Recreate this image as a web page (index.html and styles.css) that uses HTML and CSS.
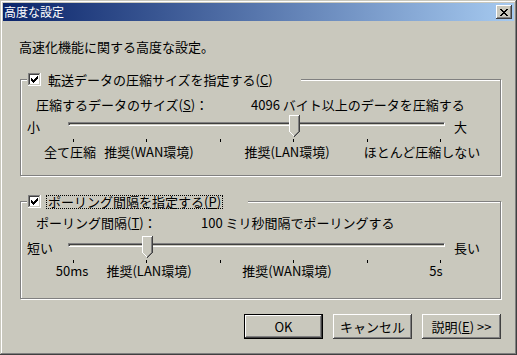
FILE: index.html
```html
<!DOCTYPE html>
<html lang="ja">
<head>
<meta charset="utf-8">
<title>高度な設定</title>
<link rel="stylesheet" href="styles.css">
</head>
<body>
<div class="window">
  <div class="titlebar">
    <span class="title">高度な設定</span>
    <span class="close">
      <svg width="8" height="7" viewBox="0 0 8 7" shape-rendering="crispEdges"><path d="M0 0h2v1H0zM6 0h2v1H6zM1 1h2v1H1zM5 1h2v1H5zM2 2h4v1H2zM3 3h2v1H3zM2 4h4v1H2zM1 5h2v1H1zM5 5h2v1H5zM0 6h2v1H0zM6 6h2v1H6z" fill="#000"/></svg>
    </span>
  </div>
  <div class="client">
    <p class="intro">高速化機能に関する高度な設定。</p>

    <section class="group g1">
      <div class="legend legend1">
        <svg class="cb" width="13" height="13" viewBox="0 0 13 13" shape-rendering="crispEdges"><rect width="13" height="13" fill="#fff"/><path d="M0 0h12v1H1v11H0z" fill="#808080"/><path d="M1 1h10v1H2v9H1z" fill="#404040"/><path d="M12 0h1v13H0v-1h12z" fill="#fff"/><path d="M11 1h1v11H1v-1h10z" fill="#c9c8bd"/><path d="M3 5h1v3H3zM4 6h1v3H4zM5 7h1v3H5zM6 6h1v3H6zM7 5h1v3H7zM8 4h1v3H8zM9 3h1v3H9z" fill="#000"/></svg>
        <span class="cb-label">転送データの圧縮サイズを指定する(<u>C</u>)</span>
      </div>
      <div class="row">
        <span class="row-label rl1">圧縮するデータのサイズ(<u>S</u>)：</span>
        <span class="row-value">4096 バイト以上のデータを圧縮する</span>
      </div>
      <div class="slider">
        <span class="end-l">小</span>
        <div class="track-area">
          <div class="track"></div>
          <svg class="thumb thumb1" width="11" height="22" viewBox="0 0 11 22" shape-rendering="crispEdges"><path d="M0 0h11v16h-1v1h-1v1h-1v1h-1v1h-1v1h-1v-1h-1v-1h-1v-1h-1v-1h-1v-1H0z" fill="#c9c8bd"/><path d="M0 0h10v1H1v15H0zM0 16h1v1H0zM1 17h1v1H1zM2 18h1v1H2zM3 19h1v1H3zM4 20h1v1H4z" fill="#fff"/><path d="M9 1h1v15H9zM8 17h1v1H8zM7 18h1v1H7zM6 19h1v1H6zM5 20h1v1H5zM9 16h1v1H9z" fill="#808080"/><path d="M10 0h1v17h-1zM9 17h1v1H9zM8 18h1v1H8zM7 19h1v1H7zM6 20h1v1H6zM5 21h1v1H5z" fill="#404040"/></svg>
        </div>
        <span class="end-r">大</span>
      </div>
      <div class="ticks"><i></i><i></i><i></i><i></i><i></i><i></i></div>
      <div class="scale scale1">
        <span class="sc-all">全て圧縮</span>
        <span class="sc-wan1">推奨(WAN環境)</span>
        <span class="sc-lan1">推奨(LAN環境)</span>
        <span class="sc-none">ほとんど圧縮しない</span>
      </div>
    </section>

    <section class="group g2">
      <div class="legend legend2">
        <svg class="cb" width="13" height="13" viewBox="0 0 13 13" shape-rendering="crispEdges"><rect width="13" height="13" fill="#fff"/><path d="M0 0h12v1H1v11H0z" fill="#808080"/><path d="M1 1h10v1H2v9H1z" fill="#404040"/><path d="M12 0h1v13H0v-1h12z" fill="#fff"/><path d="M11 1h1v11H1v-1h10z" fill="#c9c8bd"/><path d="M3 5h1v3H3zM4 6h1v3H4zM5 7h1v3H5zM6 6h1v3H6zM7 5h1v3H7zM8 4h1v3H8zM9 3h1v3H9z" fill="#000"/></svg>
        <span class="cb-label focused">ポーリング間隔を指定する(<u>P</u>)</span>
      </div>
      <div class="row">
        <span class="row-label rl2">ポーリング間隔(<u>T</u>)：</span>
        <span class="row-value">100 ミリ秒間隔でポーリングする</span>
      </div>
      <div class="slider">
        <span class="end-l">短い</span>
        <div class="track-area">
          <div class="track"></div>
          <svg class="thumb thumb2" width="11" height="22" viewBox="0 0 11 22" shape-rendering="crispEdges"><path d="M0 0h11v16h-1v1h-1v1h-1v1h-1v1h-1v1h-1v-1h-1v-1h-1v-1h-1v-1h-1v-1H0z" fill="#c9c8bd"/><path d="M0 0h10v1H1v15H0zM0 16h1v1H0zM1 17h1v1H1zM2 18h1v1H2zM3 19h1v1H3zM4 20h1v1H4z" fill="#fff"/><path d="M9 1h1v15H9zM8 17h1v1H8zM7 18h1v1H7zM6 19h1v1H6zM5 20h1v1H5zM9 16h1v1H9z" fill="#808080"/><path d="M10 0h1v17h-1zM9 17h1v1H9zM8 18h1v1H8zM7 19h1v1H7zM6 20h1v1H6zM5 21h1v1H5z" fill="#404040"/></svg>
        </div>
        <span class="end-r">長い</span>
      </div>
      <div class="ticks"><i></i><i></i><i></i><i></i><i></i><i></i></div>
      <div class="scale scale2">
        <span class="sc-50">50ms</span>
        <span class="sc-lan2">推奨(LAN環境)</span>
        <span class="sc-wan2">推奨(WAN環境)</span>
        <span class="sc-5s">5s</span>
      </div>
    </section>

    <div class="buttons">
      <button class="btn btn-default" type="button">OK</button>
      <button class="btn" type="button">キャンセル</button>
      <button class="btn" type="button">説明(<u>E</u>) &gt;&gt;</button>
    </div>
  </div>
</div>
</body>
</html>
```

FILE: styles.css
```css
html, body {
  margin: 0;
  padding: 0;
  background: #c9c8bd;
}

body {
  font-family: "Noto Sans CJK JP", "Noto Sans", sans-serif;
  font-size: 13px;
  color: #000;
}

.window {
  width: 517px;
  height: 355px;
  box-sizing: border-box;
  padding: 3px;
  background: #c9c8bd;
  box-shadow:
    inset -1px -1px 0 #404040,
    inset 1px 1px 0 #c9c8bd,
    inset -2px -2px 0 #808080,
    inset 2px 2px 0 #fff;
  display: flex;
  flex-direction: column;
}

.titlebar {
  height: 18px;
  display: flex;
  align-items: center;
  justify-content: space-between;
  padding: 0 2px 0 1px;
  background: linear-gradient(to right, #0a246a, #a6caf0);
  color: #fff;
}

.title {
  line-height: 18px;
  font-size: 12px;
}

.close {
  width: 16px;
  height: 14px;
  box-sizing: border-box;
  display: flex;
  align-items: center;
  justify-content: center;
  background: #c9c8bd;
  box-shadow:
    inset -1px -1px 0 #404040,
    inset 1px 1px 0 #fff,
    inset -2px -2px 0 #808080,
    inset 2px 2px 0 #c9c8bd;
}

.client {
  flex: 1;
  padding: 0 13px 0 16px;
}

.intro {
  margin: 18px 0 0;
  line-height: 15px;
}

.group {
  position: relative;
  box-sizing: border-box;
  margin: 25px 0 0 1px;
  border: 1px solid #808080;
  box-shadow: 1px 1px 0 #fff, inset 1px 1px 0 #fff;
}

.g1 { height: 97px; }
.g2 { height: 98px; }

.legend {
  position: absolute;
  top: -7px;
  left: 6px;
  height: 13px;
  padding-left: 1px;
  display: flex;
  align-items: center;
  background: #c9c8bd;
}

.legend1 { width: 273px; }
.legend2 { width: 220px; }

.cb {
  display: block;
  flex: none;
}

.cb-label {
  margin-left: 5px;
  padding: 0 1px;
  line-height: 12px;
  border: 1px dotted transparent;
  white-space: nowrap;
}

.cb-label.focused {
  border-color: #000;
}

.row {
  display: flex;
  line-height: 15px;
  padding-left: 15px;
  white-space: nowrap;
}

.g1 .row { margin-top: 17px; }
.g2 .row { margin-top: 13px; }

.rl1 { width: 215px; }
.rl2 { width: 165px; }

.slider {
  display: flex;
  align-items: center;
  height: 22px;
  padding-left: 6px;
  line-height: 15px;
}

.g1 .slider { margin-top: 3px; }
.g2 .slider { margin-top: 6px; }

.end-l { width: 41px; flex: none; }
.end-r { margin-left: 9px; }

.track-area {
  position: relative;
  width: 377px;
  height: 22px;
  flex: none;
}

.track {
  margin-top: 7px;
  height: 4px;
  box-sizing: border-box;
  border-top: 1px solid #808080;
  border-left: 1px solid #808080;
  border-bottom: 1px solid #fff;
  border-right: 1px solid #fff;
  background: #c9c8bd;
  box-shadow: inset 1px 1px 0 #404040;
}

.thumb {
  position: absolute;
  top: 0;
  display: block;
}

.thumb1 { left: 221px; }
.thumb2 { left: 74px; }

.ticks {
  display: flex;
  justify-content: space-between;
  width: 368px;
  height: 3px;
  margin: 2px 0 0 52px;
}

.ticks i {
  width: 1px;
  background: #000;
}

.scale {
  display: flex;
  line-height: 15px;
  white-space: nowrap;
}

.scale1 { margin-top: 2px; }
.scale2 { margin-top: 0; }

.scale span {
  flex: none;
  text-align: center;
}

.sc-all  { width: 70px;  margin-left: 14px; }
.sc-wan1 { width: 90px;  margin-left: -1px; }
.sc-lan1 { width: 90px;  margin-left: 48px; }
.sc-none { width: 130px; margin-left: 25px; }

.sc-50   { width: 50px;  margin-left: 26px; }
.sc-lan2 { width: 90px;  margin-left: 7px; }
.sc-wan2 { width: 90px;  margin-left: 48px; }
.sc-5s   { width: 30px;  margin-left: 89px; }

.buttons {
  display: flex;
  justify-content: flex-end;
  gap: 10px;
  margin-top: 15px;
}

.btn {
  width: 79px;
  height: 25px;
  box-sizing: border-box;
  padding: 0;
  margin: 0;
  border: none;
  font: inherit;
  color: #000;
  line-height: 15px;
  display: flex;
  align-items: center;
  justify-content: center;
  background: #c9c8bd;
  box-shadow:
    inset -1px -1px 0 #404040,
    inset 1px 1px 0 #fff,
    inset -2px -2px 0 #808080,
    inset 2px 2px 0 #c9c8bd;
}

.btn-default {
  border: 1px solid #000;
}
```
